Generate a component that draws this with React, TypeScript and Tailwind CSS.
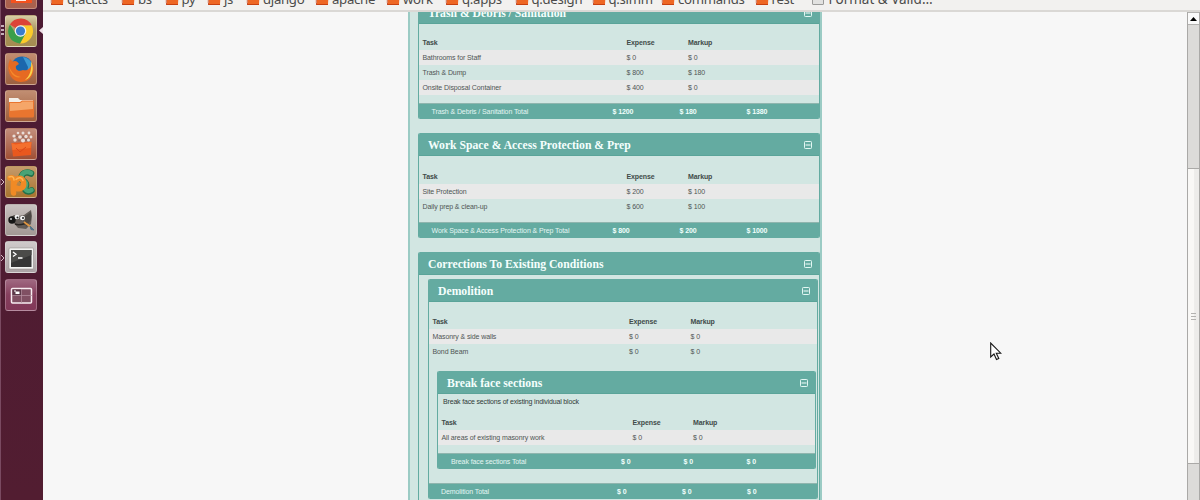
import React from "react";

type Row = [string, string, string];

const small = "font-['Liberation_Sans',Arial,sans-serif] text-[7px] tracking-[-0.1px]";

function Collapse() {
  return (
    <svg width="8" height="8" viewBox="0 0 8 8" className="block shrink-0">
      <rect x="0.5" y="0.5" width="7" height="7" rx="0.8" fill="none" stroke="#e3f7f3" strokeWidth="1" />
      <path d="M1.500 4h5" stroke="#f4fffc" strokeWidth="1" />
    </svg>
  );
}

function Header({ title }: { title: string }) {
  return (
    <div className="box-border flex h-[23px] shrink-0 items-center justify-between border-b border-[#5aa499] bg-[#64aba1] pr-[7px] pl-[9px] pt-[2px]">
      <span className="pt-px font-['Liberation_Serif','Times_New_Roman',serif] text-[11.7px] leading-[20px] font-bold whitespace-nowrap text-[#f5fffd]">
        {title}
      </span>
      <Collapse />
    </div>
  );
}

function Tasks({ rows, cols }: { rows: Row[]; cols: string }) {
  return (
    <div className={`${small} leading-[16px] whitespace-nowrap text-[#4f5554]`}>
      <div className={`grid h-[15px] pl-[3.5px] font-bold text-[#414b49] ${cols}`}>
        <span>Task</span>
        <span>Expense</span>
        <span>Markup</span>
      </div>
      {rows.map((r, i) => (
        <div key={r[0]} className={`grid h-[15px] pl-[3.5px] ${cols} ${i % 2 === 0 ? "bg-[#e9e9e9]" : ""}`}>
          <span>{r[0]}</span>
          <span>{r[1]}</span>
          <span>{r[2]}</span>
        </div>
      ))}
    </div>
  );
}

function Footer({ label, values, cols }: { label: string; values: string[]; cols: string }) {
  return (
    <div className={`box-border grid h-[16px] shrink-0 border-t border-[#8fb5ae] bg-[#64aba1] leading-[15px] whitespace-nowrap text-[#e4f6f3] ${small} ${cols}`}>
      <span>{label}</span>
      {values.map((v, i) => (
        <span key={i} className="font-bold text-[#f1fffc]">{v}</span>
      ))}
    </div>
  );
}

const panel = "flex flex-col overflow-hidden rounded-[2px] border-x border-[#64aba1] bg-[#d2e6e2]";
const outerCols = "grid-cols-[204px_61.5px_1fr]";
const outerFoot = "pl-[12.5px] grid-cols-[181px_67px_67px_1fr]";

function Tile({ bg, children }: { bg: string; children?: React.ReactNode }) {
  return (
    <div className={`box-border h-8 w-8 shrink-0 overflow-hidden rounded-[3px] border border-white/25 bg-linear-to-b ${bg}`}>
      <svg width="32" height="32" viewBox="0 0 32 32" className="-m-px block">
        {children}
      </svg>
    </div>
  );
}

function Launcher() {
  return (
    <div className="relative h-full w-[43px] shrink-0 overflow-hidden border-l border-[#7a4a61] bg-linear-to-b from-[#4c1b33] to-[#521d31]">
      <div className="-mt-[23px] ml-[4px] flex flex-col gap-[5.75px]">
        <Tile bg="from-[#b06450] to-[#a8604d]">
          <rect x="6" y="16" width="21" height="10" fill="#f4511e" />
          <rect x="11" y="18" width="10" height="6" fill="#ffe9df" />
          <rect x="14" y="20" width="7" height="2" fill="#f4511e" />
        </Tile>
        <Tile bg="from-[#d8cda4] via-[#a8925c] to-[#a58c50]">
          <path d="M15.5 16 4.9 9.5A12.5 12.5 0 0 1 26.8 10.5H15.5Z" fill="#dc4437" />
          <path d="M15.5 10.5H26.8A12.5 12.5 0 0 1 15 28.5L20.5 18.5Z" fill="#fbcb2a" />
          <path d="M4.9 9.5A12.5 12.5 0 0 0 15 28.5L20.5 18.5 10.8 18.8Z" fill="#3a9f4a" />
          <circle cx="15.5" cy="16" r="5.8" fill="#f2f5f4" />
          <circle cx="15.5" cy="16" r="4.6" fill="#3b7dcb" />
        </Tile>
        <Tile bg="from-[#c28c70] to-[#9c6040]">
          <circle cx="17" cy="14.5" r="11" fill="#1b67ad" />
          <path d="M18 4a11 11 0 0 1 9 15l-5 2 1-7Z" fill="#3d9ad2" />
          <path d="M3.500 11 5 6l2.500 2.500C11 7 13 9 14 11l-3 2c-1 4 3 6 7 4 3 1 8 0 9-8 4 9 0 20-11 20C7 29 2 20 3.500 11Z" fill="#e66a22" />
          <path d="M26 8c4 8 1 17-6 19 5-4 7-11 6-19Z" fill="#f9d44c" />
          <path d="M4 13c3 8 7 10 12 11-6 2-11-3-12-11Z" fill="#f58a2c" />
        </Tile>
        <Tile bg="from-[#c18e72] to-[#9e5d3a]">
          <path d="M4 8h9l2 2h13v4H4Z" fill="#f3efe8" />
          <path d="M4 12h11l2-1.500h12V26q0 1.500-1.500 1.500h-22Q4 27.500 4 26Z" fill="#e9752f" />
          <path d="M5 13h10.500l2-1.500H28V19L5 21Z" fill="#f5a669" />
        </Tile>
        <Tile bg="from-[#c18d7b] to-[#a04f34]">
          <path d="M6.500 15l20-1-.500 13-18 1.500Z" fill="#e9581e" />
          <path d="M6.500 15l4 1.500 16-2.500-1 6-18 2Z" fill="#f4702e" />
          <g fill="#e9ddd8">
            <circle cx="9" cy="8" r="1.600" /><circle cx="13" cy="5" r="1.300" /><circle cx="18" cy="5" r="1.500" />
            <circle cx="24" cy="5" r="1.400" /><circle cx="26" cy="9" r="1.400" /><circle cx="15" cy="9" r="1.800" />
            <circle cx="21" cy="8.500" r="1.700" /><circle cx="10" cy="12" r="1.700" /><circle cx="18" cy="12.500" r="2" /><circle cx="23.500" cy="12" r="1.500" />
          </g>
          <g fill="#8d6a62">
            <circle cx="12" cy="8.500" r="1" /><circle cx="18" cy="9" r="1" /><circle cx="14" cy="12.500" r="1" /><circle cx="21" cy="12" r="1" />
          </g>
          <path d="M11 20l4 4 6-5" fill="none" stroke="#d9481a" />
        </Tile>
        <Tile bg="from-[#c59a6a] to-[#a8742e]">
          <path d="M26 7.500c-4-2-8-1-9.500 3-1 4 2 4 4 6.500s-1.500 5 0 7 4 1.500 6 .500" fill="none" stroke="#21704a" strokeWidth="6.500" strokeLinecap="round" />
          <path d="M26 7c-4-2-8-1-9.500 3-1 4 2 4 4 6.500s-1.500 5 0 7 4 1.500 6 .500" fill="none" stroke="#49a376" strokeWidth="4.500" strokeLinecap="round" />
          <path d="M5 12c3-1 4.500 1 3.500 4 0 4-.500 7 0 11M9 18c1-6 8-8 9.500-2s-4 8-7.500 6" fill="none" stroke="#f08a25" strokeWidth="5.500" strokeLinecap="round" strokeLinejoin="round" />
          <path d="M4 11c3-1.500 5 0 5 3M11 13.500c3-3 6-2 7 1" fill="none" stroke="#ffb655" strokeWidth="1.500" strokeLinecap="round" />
        </Tile>
        <Tile bg="from-[#c9c2c0] to-[#a29894]">
          <path d="M6 13 9 11l5 1 5-1 7-5 1 6-1 8-5 5-8-1-5-6Z" fill="#625b57" />
          <path d="M19 13l7-5v8l-5 7Z" fill="#4c4744" />
          <circle cx="7" cy="16" r="3.700" fill="#151515" />
          <circle cx="6" cy="15" r="1" fill="#cfcfcf" />
          <ellipse cx="12" cy="13" rx="2.400" ry="2.200" fill="#f3f3f3" /><ellipse cx="17.500" cy="14" rx="2.500" ry="2.200" fill="#f3f3f3" />
          <circle cx="12.500" cy="13.500" r="1" fill="#222" /><circle cx="18" cy="14" r="1" fill="#222" />
          <path d="M10 20c4 2 8 0 12-1" fill="none" stroke="#292522" strokeWidth="1.500" />
          <path d="M19 18l7 5" stroke="#df9540" strokeWidth="2" />
          <path d="M25 22l4 4-3-.500Z" fill="#4f7186" stroke="#4f7186" />
        </Tile>
        <Tile bg="from-[#cfcaca] to-[#aba3a5]">
          <rect x="4" y="7" width="24.500" height="21" rx="1" fill="#f3f3f2" stroke="#898483" strokeWidth=".5" />
          <rect x="6" y="9" width="20.500" height="17" fill="#353535" />
          <path d="M6 9h20.500v5L6 22Z" fill="#4b4b49" />
          <path d="m8 11 3 2.300-3 2.300M13 17h4.500" fill="none" stroke="#fff" strokeWidth="1.300" />
        </Tile>
        <Tile bg="from-[#9f6881] via-[#863f5e] to-[#813858]">
          <rect x="6.500" y="9.500" width="20" height="14.500" rx="1" fill="#805063" stroke="#f8edf2" strokeWidth="1.500" />
          <rect x="7.500" y="10.500" width="9" height="6" fill="#5c3949" />
          <path d="M16.500 10v14M7 16.500h20" stroke="#b893a3" strokeWidth=".7" />
          <rect x="10.500" y="12.500" width="4" height="2.500" fill="#fff" />
          <path d="M9 12h2" stroke="#fff" />
        </Tile>
      </div>
      <svg width="42" height="300" className="absolute top-0 left-0">
        <path d="M0 26h3M0 30h3M0 34h3" stroke="#eee1e7" strokeWidth="1.300" />
        <path d="M42 27v7l-4-3.500Z" fill="#eee1e7" />
        <path d="m-1 178 4 4-4 4M-1 254l4 4-4 4" fill="none" stroke="#d3bac6" />
      </svg>
    </div>
  );
}

function Folder() {
  return (
    <svg width="14" height="14" viewBox="0 0 14 14" className="mt-px block shrink-0">
      <path d="M1 1h5l1 2h6v10H1Z" fill="#b8493a" />
      <path d="M2.500 4h11l-.500 8.500H1.500Z" fill="#ee6724" />
      <path d="M1.500 12.500H13" stroke="#c8400f" />
      <path d="M1 3v8" stroke="#eab9a1" />
    </svg>
  );
}

const bookmarks: [string, string][] = [
  ["q.accts", "w-[71px]"],
  ["bs", "w-[43.5px]"],
  ["py", "w-[42.5px]"],
  ["js", "w-[39px]"],
  ["django", "w-[69px]"],
  ["apache", "w-[71px]"],
  ["work", "w-[59px]"],
  ["q.apps", "w-[69.5px]"],
  ["q.design", "w-[77px]"],
  ["q.simm", "w-[69.5px]"],
  ["commands", "w-[93.5px]"],
  ["rest", "w-[53px]"],
];

function Bookmarks() {
  return (
    <div className="box-border h-[12px] shrink-0 overflow-hidden border-b-2 border-[#dad8d5] bg-[#f2f1ef]">
      <div className="-mt-[9px] flex h-5 items-start pl-[7px] font-['Noto_Sans','Open_Sans',sans-serif] text-[13.5px] leading-[17px] whitespace-nowrap text-[#4b4b4a]">
        {bookmarks.map(([name, w]) => (
          <div key={name} className={`flex shrink-0 gap-[3px] text-[13.2px] tracking-[-0.3px] ${w}`}>
            <Folder />
            <span>{name}</span>
          </div>
        ))}
        <div className="ml-[4px] flex gap-[5px]">
          <div className="box-border h-[14px] w-[12px] rounded-[1px] border border-[#9b9b99] bg-[#e2e2e0]" />
          <span>Format &amp; Valid…</span>
        </div>
      </div>
    </div>
  );
}

function Scrollbar() {
  return (
    <div className="flex w-[13px] shrink-0 flex-col border-x border-[#aaa9a7] bg-[#dcdbd9]">
      <div className="box-border flex h-[13px] items-center justify-center border-y border-[#b3b2b0] bg-[#fafafa]">
        <svg width="7" height="4" viewBox="0 0 7 4"><path d="M0 4 3.500 0 7 4Z" fill="#000" /></svg>
      </div>
      <div className="h-[143px]" />
      <div className="box-border flex h-[296px] flex-col items-center justify-center gap-[2px] border-y border-[#aaa9a7] bg-linear-to-r from-[#f9f8f6] from-50% to-[#edecea] to-60%">
        <div className="h-px w-[5px] bg-[#b3b2b0]" />
        <div className="h-px w-[5px] bg-[#b3b2b0]" />
        <div className="h-px w-[5px] bg-[#b3b2b0]" />
      </div>
    </div>
  );
}

export default function App() {
  return (
    <div className="relative flex h-[500px] w-[1200px] overflow-hidden bg-[#f7f7f7]">
      <Launcher />
      <div className="flex min-w-0 flex-1 flex-col">
        <Bookmarks />
        <div className="flex min-h-0 flex-1">
          <div className="flex min-w-0 flex-1 overflow-hidden pl-[365px]">
            <div className="box-border h-[520px] w-[414px] shrink-0 border-x-2 border-[#9bcbc4] bg-[#d2e6e2] pl-[8px]">
              <div className="-mt-[11px] flex w-[402px] flex-col gap-[14px]">
                <div className={panel}>
                  <Header title="Trash & Debris / Sanitation" />
                  <div className="pt-[11px] pb-[8px]">
                    <Tasks
                      cols={outerCols}
                      rows={[
                        ["Bathrooms for Staff", "$ 0", "$ 0"],
                        ["Trash & Dump", "$ 800", "$ 180"],
                        ["Onsite Disposal Container", "$ 400", "$ 0"],
                      ]}
                    />
                  </div>
                  <Footer label="Trash & Debris / Sanitation Total" values={["$ 1200", "$ 180", "$ 1380"]} cols={outerFoot} />
                </div>
                <div className={panel}>
                  <Header title="Work Space & Access Protection & Prep" />
                  <div className="pt-[13px] pb-[8px]">
                    <Tasks
                      cols={outerCols}
                      rows={[
                        ["Site Protection", "$ 200", "$ 100"],
                        ["Daily prep & clean-up", "$ 600", "$ 100"],
                      ]}
                    />
                  </div>
                  <Footer label="Work Space & Access Protection & Prep Total" values={["$ 800", "$ 200", "$ 1000"]} cols={outerFoot} />
                </div>
                <div className={`${panel} h-[270px]`}>
                  <Header title="Corrections To Existing Conditions" />
                  <div className="pt-[4px] pr-[1px] pl-[9px]">
                    <div className={panel}>
                      <Header title="Demolition" />
                      <div className="pt-[12px] pb-[12px]">
                        <Tasks
                          cols="grid-cols-[196.5px_61.5px_1fr]"
                          rows={[
                            ["Masonry & side walls", "$ 0", "$ 0"],
                            ["Bond Beam", "$ 0", "$ 0"],
                          ]}
                        />
                      </div>
                      <div className="pr-[1px] pb-[14px] pl-[8px]">
                        <div className={panel}>
                          <Header title="Break face sections" />
                          <p className={`${small} pl-[5px] leading-[16px] tracking-[-0.17px] text-[#303a38]`}>Break face sections of existing individual block</p>
                          <div className="pt-[5px] pb-[8px]">
                            <Tasks
                              cols="grid-cols-[191px_60.500px_1fr]"
                              rows={[["All areas of existing masonry work", "$ 0", "$ 0"]]}
                            />
                          </div>
                          <Footer label="Break face sections Total" values={["$ 0", "$ 0", "$ 0"]} cols="pl-[13px] grid-cols-[170px_62.500px_63px_1fr]" />
                        </div>
                      </div>
                      <Footer label="Demolition Total" values={["$ 0", "$ 0", "$ 0"]} cols="pl-[12px] grid-cols-[176px_65px_65px_1fr]" />
                    </div>
                  </div>
                </div>
              </div>
            </div>
          </div>
          <Scrollbar />
        </div>
      </div>
      <svg width="12" height="19" viewBox="0 0 12 19" className="absolute top-[342px] left-[990px]">
        <path d="M.7 1v14l3.300-3 2.500 5.500 2.300-1-2.500-5.300h4.500Z" fill="#fff" stroke="#171717" strokeWidth="1.100" />
      </svg>
    </div>
  );
}
